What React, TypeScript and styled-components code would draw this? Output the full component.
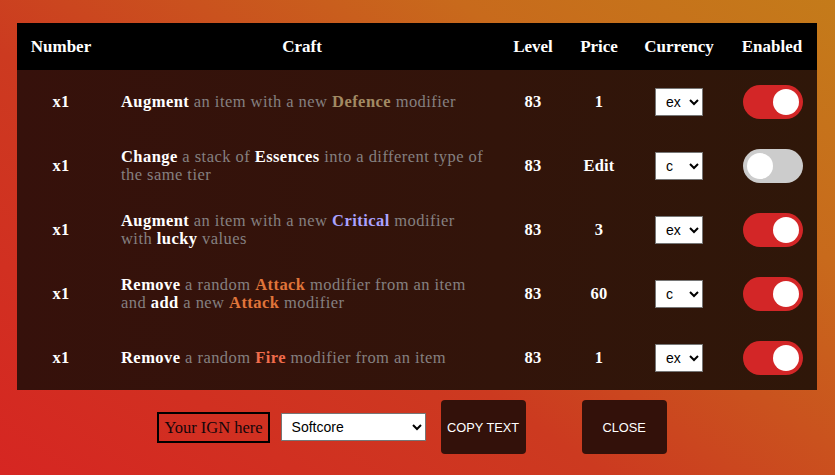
import styled, { createGlobalStyle } from 'styled-components';

const GlobalStyle = createGlobalStyle`
  html, body {
    margin: 0;
    padding: 0;
  }
  body {
    font-family: 'Liberation Serif', serif;
  }
`;

const Page = styled.div`
  min-height: 475px;
  box-sizing: border-box;
  padding: 23px 18px 0 17px;
  background: linear-gradient(35deg, #d62622 0%, #cc3a20 40%, #c86a1c 75%, #c47b1a 100%);
  overflow: hidden;
`;

const Table = styled.table`
  width: 800px;
  border-collapse: collapse;
  table-layout: fixed;
  background: linear-gradient(90deg, #36110b 0%, #32140a 60%, #2f1709 100%);
  color: #fff;
`;

const HeadCell = styled.th`
  background: #000;
  height: 47px;
  padding: 0;
  font-size: 17px;
  font-weight: bold;
  text-align: center;
  vertical-align: middle;
`;

const Row = styled.tr`
  height: 64px;
`;

const Cell = styled.td<{ align?: 'left' | 'center' }>`
  padding: ${({ align }) => (align === 'left' ? '0 12px 0 16px' : '0 16px')};
  text-align: ${({ align }) => align || 'center'};
  vertical-align: middle;
  font-size: 16.5px;
  font-weight: ${({ align }) => (align === 'left' ? 'normal' : 'bold')};
  line-height: 18px;
  letter-spacing: ${({ align }) => (align === 'left' ? '0.45px' : '0.2px')};
`;

type Tone = 'key' | 'plain' | 'defence' | 'critical' | 'attack' | 'fire';

const toneColor: Record<Tone, string> = {
  key: '#ffffff',
  plain: '#858080',
  defence: '#a28a63',
  critical: '#aaa2ff',
  attack: '#e0753a',
  fire: '#f06c4c',
};

const Word = styled.span<{ tone: Tone }>`
  color: ${({ tone }) => toneColor[tone]};
  font-weight: ${({ tone }) => (tone === 'plain' ? 'normal' : 'bold')};
`;

const CurrencySelect = styled.select`
  width: 48px;
  height: 28px;
  font-family: 'Liberation Sans', Arial, sans-serif;
  font-size: 14px;
  color: #000;
  background: #fff;
  border: 1px solid #767676;
  border-radius: 0;
  padding: 0 2px 0 6px;
`;

const Switch = styled.span<{ on: boolean }>`
  display: inline-flex;
  align-items: center;
  box-sizing: border-box;
  width: 60px;
  height: 34px;
  padding: 0 4px;
  border-radius: 34px;
  background: ${({ on }) => (on ? '#d32627' : '#cccccc')};
  justify-content: ${({ on }) => (on ? 'flex-end' : 'flex-start')};
  vertical-align: middle;

  &::after {
    content: '';
    width: 26px;
    height: 26px;
    border-radius: 50%;
    background: #fff;
  }
`;

const Footer = styled.div`
  display: flex;
  align-items: center;
  justify-content: center;
  width: 800px;
  padding: 10px 10px 0 0;
  box-sizing: border-box;
`;

const IgnBox = styled.div`
  border: 2px solid #000;
  padding: 5px 5px 4px;
  font-size: 16.5px;
  line-height: 18px;
  color: #14060a;
  margin-right: 11px;
`;

const ModeSelect = styled.select`
  width: 145px;
  height: 28px;
  font-family: 'Liberation Sans', Arial, sans-serif;
  font-size: 14px;
  color: #000;
  background: #fff;
  border: 1px solid #767676;
  padding: 0 4px 0 6px;
  margin-right: 15px;
`;

const Button = styled.button<{ gap?: number }>`
  width: 85px;
  height: 54px;
  border: none;
  border-radius: 4px;
  background: #33110a;
  color: #fff;
  font-family: 'Liberation Sans', Arial, sans-serif;
  font-size: 12.8px;
  padding: 0;
  margin-right: ${({ gap }) => gap || 0}px;
`;

type Piece = [string, Tone];

type Craft = {
  text: Piece[];
  price: string;
  currency: string;
  enabled: boolean;
};

const crafts: Craft[] = [
  {
    text: [
      ['Augment', 'key'],
      [' an item with a new ', 'plain'],
      ['Defence', 'defence'],
      [' modifier', 'plain'],
    ],
    price: '1',
    currency: 'ex',
    enabled: true,
  },
  {
    text: [
      ['Change', 'key'],
      [' a stack of ', 'plain'],
      ['Essences', 'key'],
      [' into a different type of the same tier', 'plain'],
    ],
    price: 'Edit',
    currency: 'c',
    enabled: false,
  },
  {
    text: [
      ['Augment', 'key'],
      [' an item with a new ', 'plain'],
      ['Critical', 'critical'],
      [' modifier with ', 'plain'],
      ['lucky', 'key'],
      [' values', 'plain'],
    ],
    price: '3',
    currency: 'ex',
    enabled: true,
  },
  {
    text: [
      ['Remove', 'key'],
      [' a random ', 'plain'],
      ['Attack', 'attack'],
      [' modifier from an item and ', 'plain'],
      ['add', 'key'],
      [' a new ', 'plain'],
      ['Attack', 'attack'],
      [' modifier', 'plain'],
    ],
    price: '60',
    currency: 'c',
    enabled: true,
  },
  {
    text: [
      ['Remove', 'key'],
      [' a random ', 'plain'],
      ['Fire', 'fire'],
      [' modifier from an item', 'plain'],
    ],
    price: '1',
    currency: 'ex',
    enabled: true,
  },
];

export default function App() {
  return (
    <Page>
      <GlobalStyle />
      <Table>
        <colgroup>
          <col style={{ width: 88 }} />
          <col style={{ width: 394 }} />
          <col style={{ width: 68 }} />
          <col style={{ width: 64 }} />
          <col style={{ width: 96 }} />
          <col style={{ width: 90 }} />
        </colgroup>
        <thead>
          <tr>
            <HeadCell>Number</HeadCell>
            <HeadCell>Craft</HeadCell>
            <HeadCell>Level</HeadCell>
            <HeadCell>Price</HeadCell>
            <HeadCell>Currency</HeadCell>
            <HeadCell>Enabled</HeadCell>
          </tr>
        </thead>
        <tbody>
          {crafts.map((craft, i) => (
            <Row key={i}>
              <Cell>x1</Cell>
              <Cell align="left">
                {craft.text.map(([t, tone], j) => (
                  <Word key={j} tone={tone}>
                    {t}
                  </Word>
                ))}
              </Cell>
              <Cell>83</Cell>
              <Cell>{craft.price}</Cell>
              <Cell>
                <CurrencySelect defaultValue={craft.currency}>
                  <option value="ex">ex</option>
                  <option value="c">c</option>
                </CurrencySelect>
              </Cell>
              <Cell>
                <Switch on={craft.enabled} />
              </Cell>
            </Row>
          ))}
        </tbody>
      </Table>
      <Footer>
        <IgnBox>Your IGN here</IgnBox>
        <ModeSelect defaultValue="Softcore">
          <option>Softcore</option>
          <option>Hardcore</option>
        </ModeSelect>
        <Button gap={56}>COPY TEXT</Button>
        <Button>CLOSE</Button>
      </Footer>
    </Page>
  );
}
